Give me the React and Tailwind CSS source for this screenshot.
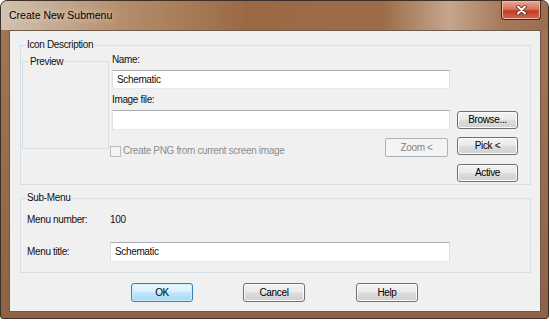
import React from 'react';

const Button = ({ children, className = '' }) => (
    <button
        className={`flex items-center justify-center rounded-[3px] border border-[#707070] bg-[linear-gradient(#f2f2f2,#ebebeb_45%,#dddddd_52%,#cfcfcf)] shadow-[inset_0_0_0_1px_#fbfbfb] leading-none text-black ${className}`}
    >
        {children}
    </button>
);

const TextBox = ({ children, className = '' }) => (
    <div
        className={`flex items-center border border-[#dbdfe6] border-t-[#abadb3] border-b-[#e3e9ef] bg-white pl-[4px] leading-none ${className}`}
    >
        {children}
    </div>
);

const GroupLabel = ({ children }) => (
    <span className="absolute left-[5px] top-[-7px] bg-[#f0f0f0] px-[1px] leading-[12px]">{children}</span>
);

const App = () => {
    return (
        <div className="h-[321px] w-[550px] bg-white font-['Liberation_Sans',Arial,sans-serif] text-[10px] tracking-[-0.35px] text-[#111]">
            <div className="flex h-[319px] w-[549px] flex-col overflow-hidden rounded-t-[7px] rounded-b-[3px] border border-[#3d3028] bg-[linear-gradient(#a27656,#8e6245)]">
                {/* title bar */}
                <div className="flex h-[29px] shrink-0 items-start justify-between bg-[linear-gradient(90deg,#d3c1b1_0%,#b58e6c_22%,#9a6944_45%,#9d6d4a_70%,#c5a68d_82%,#a47858_92%,#9a6d4f_100%)] pl-[8px] pr-[7px]">
                    <span className="mt-[8px] text-[10.5px] leading-[12px] tracking-normal text-black [text-shadow:0_0_6px_#f3e6da]">
                        Create New Submenu
                    </span>
                    <div className="flex h-[19px] w-[40px] items-center justify-center rounded-b-[4px] border border-t-0 border-[#4d241b] bg-[linear-gradient(#eaa99a,#d8735d_45%,#c33c22_55%,#d2664c)] shadow-[inset_0_0_0_1px_#f0b8a8]">
                        <svg width="11" height="10" viewBox="0 0 11 10">
                            <path d="M2 1.5L9 8.5M9 1.5L2 8.5" stroke="#5a2a20" strokeWidth="3.6" strokeLinecap="round" />
                            <path d="M2 1.5L9 8.5M9 1.5L2 8.5" stroke="#ffffff" strokeWidth="2" strokeLinecap="round" />
                        </svg>
                    </div>
                </div>

                {/* client area */}
                <div className="flex-1 pb-[6px] pl-[8px] pr-[7px]">
                    <div className="h-full border border-[#6d5a4d] bg-[#f0f0f0] px-[10px] pt-[14px]">
                        {/* Icon Description */}
                        <div className="relative flex h-[140px] w-[511px] items-start border border-[#d5dfe5]">
                            <GroupLabel>Icon Description</GroupLabel>

                            <div className="relative ml-[1px] mt-[15px] h-[88px] w-[87px] shrink-0 border border-[#d5dfe5]">
                                <span className="absolute left-[6px] top-[-6px] bg-[#f0f0f0] px-[1px] leading-[12px]">Preview</span>
                            </div>

                            <div className="ml-[3px] mt-[8px] flex w-[406px] flex-col">
                                <div className="leading-[12px]">Name:</div>
                                <TextBox className="mt-[4px] h-[19px] w-[338px]">Schematic</TextBox>
                                <div className="mt-[5px] leading-[12px]">Image file:</div>
                                <div className="mt-[4px] flex items-start">
                                    <TextBox className="h-[20px] w-[338px] border-[#9bb3c9] border-t-[#7d9cbc] border-b-[#b7cadb]" />
                                    <Button className="ml-[7px] mt-[1px] h-[18px] w-[61px]">Browse...</Button>
                                </div>
                                <div className="mt-[7px] flex items-start">
                                    <div className="flex h-[20px] w-[338px] items-start justify-between">
                                        <div className="ml-[-2px] flex items-center self-end">
                                            <span className="h-[11px] w-[11px] border border-[#bcbcbc] bg-[#f4f4f4]" />
                                            <span className="ml-[2px] leading-[12px] text-[#8d8d8d]">
                                                Create PNG from current screen image
                                            </span>
                                        </div>
                                        <button className="mr-[2px] mt-[1px] flex h-[19px] w-[63px] items-center justify-center rounded-[2px] border border-[#adb2b5] bg-[#f4f4f4] leading-none text-[#838383]">
                                            Zoom &lt;
                                        </button>
                                    </div>
                                    <Button className="ml-[7px] h-[18px] w-[61px]">Pick &lt;</Button>
                                </div>
                                <Button className="ml-[345px] mt-[7px] h-[18px] w-[61px]">Active</Button>
                            </div>
                        </div>

                        {/* Sub-Menu */}
                        <div className="relative mt-[13px] h-[75px] w-[511px] border border-[#d5dfe5]">
                            <GroupLabel>Sub-Menu</GroupLabel>
                            <div className="mt-[15px] flex leading-[12px]">
                                <span className="ml-[6px] w-[83px]">Menu number:</span>
                                <span>100</span>
                            </div>
                            <div className="mt-[16px] flex items-center">
                                <span className="ml-[6px] w-[83px] leading-[12px]">Menu title:</span>
                                <TextBox className="h-[20px] w-[340px]">Schematic</TextBox>
                            </div>
                        </div>

                        {/* dialog buttons */}
                        <div className="mt-[10px] flex">
                            <button className="ml-[111px] flex h-[19px] w-[62px] items-center justify-center rounded-[3px] border border-[#3c7fb1] bg-[linear-gradient(#eaf6fd,#d9f0fc_45%,#bee6fd_52%,#a7d9f5)] shadow-[inset_0_0_0_1px_#cdeffd] leading-none text-black">
                                OK
                            </button>
                            <Button className="ml-[50px] h-[19px] w-[62px]">Cancel</Button>
                            <Button className="ml-[51px] h-[19px] w-[62px]">Help</Button>
                        </div>
                    </div>
                </div>
            </div>
        </div>
    );
};

export default App;
